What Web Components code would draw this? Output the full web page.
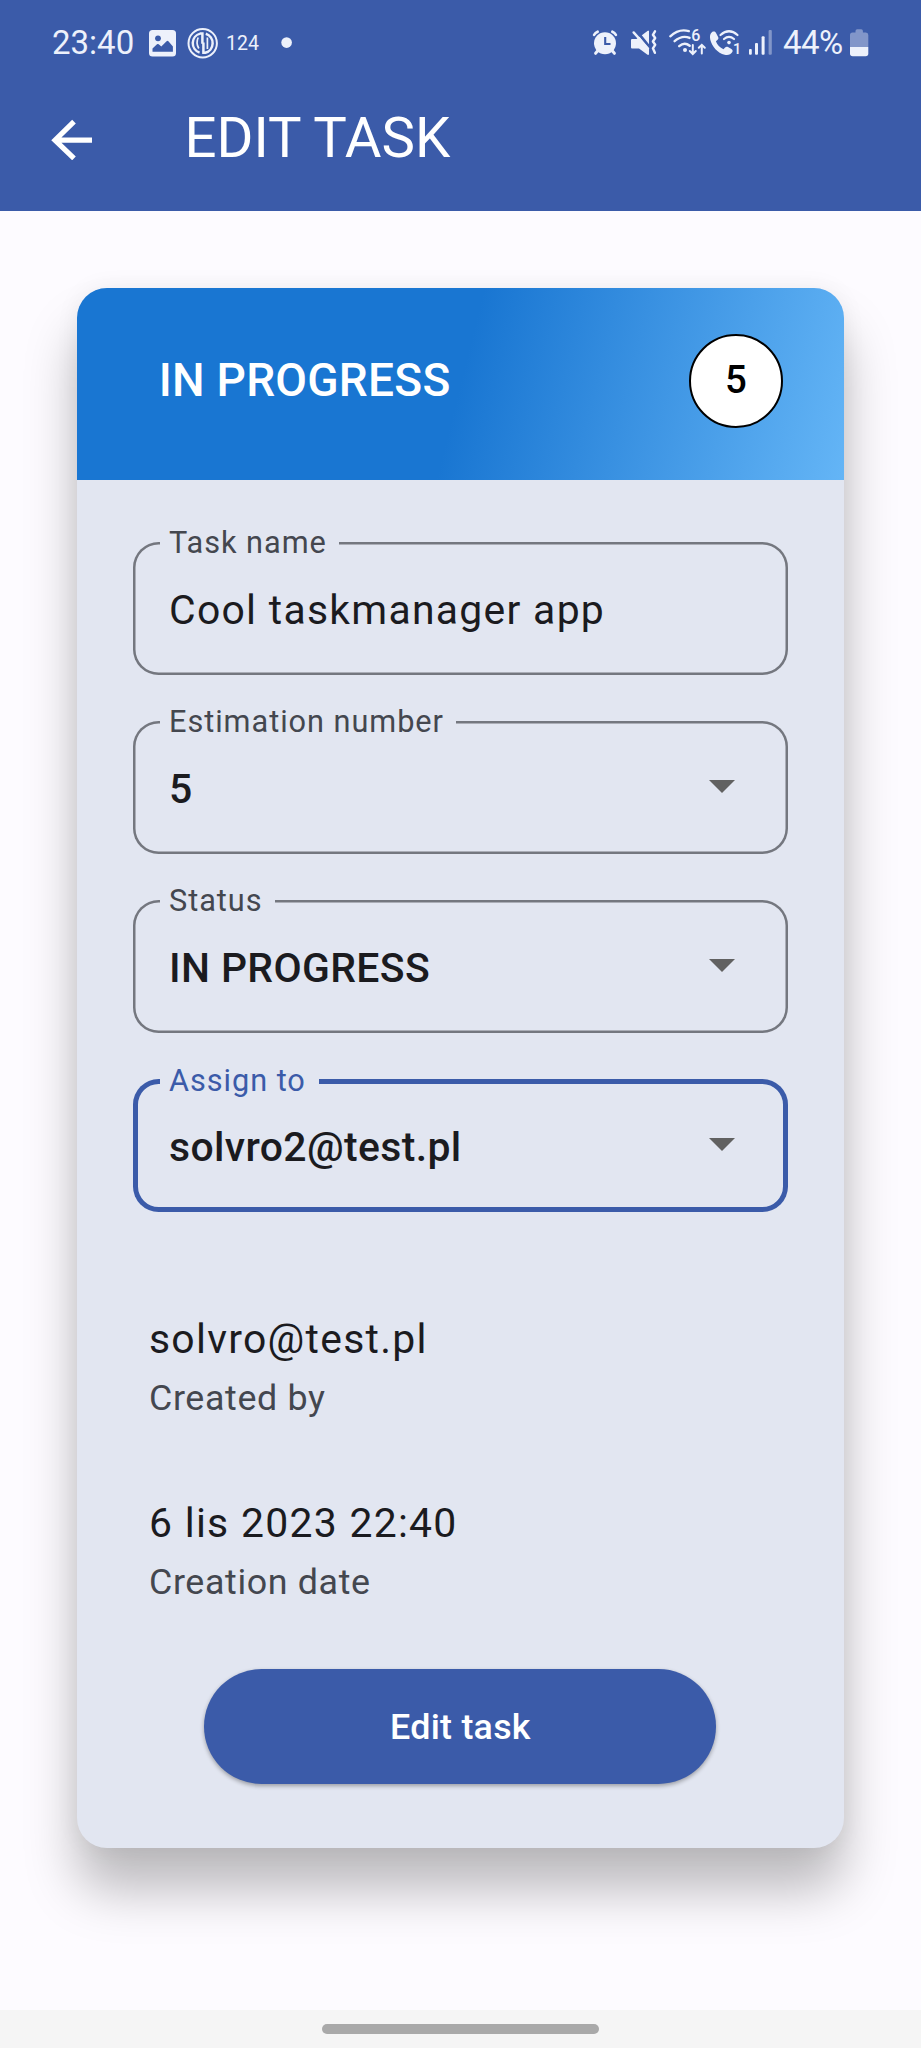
<!DOCTYPE html>
<html lang="en">
<head>
<meta charset="utf-8">
<title>Edit task</title>
<style>
html,body{margin:0;padding:0}
body{width:921px;height:2048px;overflow:hidden;background:#fdfbff;font-family:Roboto,"Liberation Sans",sans-serif;color:#1b1b1f}
</style>
</head>
<body>
<task-app></task-app>
<script>
const define = (name, html) => customElements.define(name, class extends HTMLElement {
  constructor() {
    super();
    this.attachShadow({ mode: 'open' }).innerHTML = html;
  }
});

define('status-bar', `
<style>
:host{display:flex;align-items:flex-start;height:85px;color:#edf1fb;fill:currentColor;box-sizing:border-box;padding:0 51px 0 52px;white-space:nowrap}
svg{display:block;flex:none;height:85px}
.t{font-size:33px;line-height:86px;letter-spacing:0;flex:none}
.time{width:96px}
.n{font-size:19.5px;line-height:87px;width:51px;margin-left:2px}
.pct{letter-spacing:-.6px;width:67px}
.sp{flex:1}
.st{fill:none;stroke:currentColor}
.cut{fill:#3b5ba9}
</style>
<span class="t time">23:40</span>
<svg width="30" viewBox="148 0 30 85"><rect x="149" y="30" width="27" height="26.5" rx="3.5"/><circle class="cut" cx="158" cy="38.3" r="2.9"/><path class="cut" d="M152.5 51.8v-3.3l4.5-4.2q.8-.7 1.7 0l2.6 2.3 5.3-5.4q.9-.8 1.8 0l4.5 5.4v5.2z"/></svg>
<svg width="46" viewBox="178 0 46 85"><g class="st"><circle cx="202.7" cy="43.2" r="14.2" stroke-width="2"/><path stroke-width="2.5" d="M199.6 52.6a9.9 9.9 0 0 1 .6-19h2.2v10.2M205.8 33.8a9.9 9.9 0 0 1-.6 19h-1.8V42.6"/><path stroke-width="1.7" d="M198.2 37.5q-2.6 5.6.6 11M207.4 37.5v11.5"/></g></svg>
<span class="t n">124</span>
<svg width="20" viewBox="276 0 20 85"><circle cx="285.6" cy="42.6" r="5.3"/></svg>
<span class="sp"></span>
<svg width="36" viewBox="588 0 36 85"><circle cx="605" cy="43.3" r="11"/><g class="st" stroke-linecap="round"><path stroke-width="2.6" d="M594.1 34.8q1.2-2 3.6-3.1M615.9 34.8q-1.2-2-3.6-3.1"/><path stroke-width="3" d="M598 50.5l-2.4 2.8M612 50.5l2.4 2.8"/></g><path d="M605.2 37v7h5.3" fill="none" stroke="#3b5ba9" stroke-width="2.1"/></svg>
<svg width="42" viewBox="624 0 42 85"><path d="M631 40q0-1 1-1h4.5l3-2.2L649 49v5.7h-1.5l-8.5-6.2h-7q-1 0-1-1zM641.8 35.2l6-4.5H649v13.5z"/><path class="st" stroke-width="2.4" stroke-linecap="round" stroke-linejoin="round" d="M633.6 32.4L648 48.5M655 31.3l-2.1 3.5 2.3 3.2-2.3 3.5 2.3 3.3-2.3 3.5 2 4.5"/></svg>
<svg width="42" viewBox="666 0 42 85"><g class="st" stroke-width="2.4" stroke-linecap="round"><path d="M670.3 36.3q8.5-8 18.5-5.2M674.6 41.2q7.5-6.5 15-3.3M679.2 46.2q5.2-4.6 10.5-.5"/><path stroke-width="2" d="M692.8 45v8.5M689.8 51l3 3 3-3M701.8 53.5v-8.5M698.8 47.8l3-3 3 3"/></g><circle cx="685" cy="50" r="2"/><text x="691.2" y="41.2" font-size="16" font-family="Roboto,sans-serif" font-weight="500">6</text></svg>
<svg width="38" viewBox="708 0 38 85"><path d="M712.4 31.8c1.5-.8 2.8-.4 3.5.9l2.2 4.2c.6 1.2.3 2.2-.7 3l-1.5 1.3c1.2 3.5 4 6.4 7.6 8l1.6-1.6c.8-.8 1.8-1 2.9-.5l3.4 1.8c1.3.7 1.6 2 .9 3.2-1.5 2.6-4.3 3.6-7.7 2.7-7-1.8-12.6-8-14.3-15-.8-3.5-.3-6.5 2.1-8z"/><g class="st" stroke-width="2.2" stroke-linecap="round"><path d="M720.5 35q8.5-7.5 17 0M724 39q5-4.2 10 0"/></g><circle cx="729" cy="42.6" r="1.8"/><text x="732.9" y="54.2" font-size="14.5" font-family="Roboto,sans-serif" font-weight="500">1</text></svg>
<svg width="37" viewBox="746 0 37 85"><rect x="749" y="49" width="2.8" height="5.8" rx="1"/><rect x="755" y="43" width="3" height="11.8" rx="1"/><rect x="761.6" y="36.3" width="3" height="18.5" rx="1"/><rect x="768.6" y="30" width="3.2" height="24.8" rx="1" opacity=".4"/></svg>
<span class="t pct">44%</span>
<svg width="20" viewBox="851 0 20 85"><path opacity=".4" d="M851 47V35q0-2.5 2.5-2.5h3V31q0-1.7 1.7-1.7h4q1.7 0 1.7 1.7v1.5h3q2.4 0 2.4 2.5v12z"/><path d="M851 47h18.3v6.5q0 2.7-2.7 2.7H853.7q-2.7 0-2.7-2.7z"/></svg>
`);

define('app-bar', `
<style>
:host{display:flex;flex-direction:column;height:211px;background:#3b5ba9;color:#fff}
.row{display:flex;align-items:center;height:108px}
svg{display:block;margin-left:51px;flex:none}
h1{margin:-1px 0 0 91.5px;font-size:56.3px;font-weight:400;line-height:107px;letter-spacing:0;white-space:nowrap}
</style>
<status-bar></status-bar>
<div class="row">
<svg width="42" height="42" viewBox="0 0 42 42" fill="none" stroke="#fff" stroke-width="5.2"><path d="M41 22.2H4M23 3.6L4 22.2l19 18.2"/></svg>
<h1><slot></slot></h1>
</div>`);

define('card-header', `
<style>
:host{display:flex;align-items:center;justify-content:space-between;height:191.9px;box-sizing:border-box;padding:0 61px 0 82px;background:linear-gradient(104.04deg,#1976d2 50%,#64b5f6)}
h2{margin:0;color:#fff;font-weight:500;font-size:46px;letter-spacing:.25px;line-height:60px;padding-bottom:8px;white-space:nowrap}
.badge{width:94.5px;height:94.5px;box-sizing:border-box;border:2px solid #000;border-radius:50%;background:#fff;color:#000;font-size:38.4px;font-weight:500;line-height:88px;text-align:center;margin-bottom:6px}
</style>
<h2><slot></slot></h2><div class="badge"><slot name="badge"></slot></div>`);

define('outlined-field', `
<style>
:host{--line:#74777f;--label:#44474f;--bw:2.5px;--gap:12px;--dy:-19px;display:flex;align-items:center;justify-content:space-between;position:relative;height:133px;width:655px;box-sizing:border-box;font-size:40.9px;letter-spacing:.38px;font-weight:500;padding:0 53px 0 36px}
:host([plain]){font-weight:400;letter-spacing:1.28px}
:host([focused]){--line:#3b5ba9;--label:#3b5ba9;--bw:5px;--gap:13px;--dy:-18px}
.line{position:absolute;inset:0;box-shadow:inset 0 0 0 var(--bw) var(--line);border-radius:25.6px}
.label{position:absolute;left:27px;top:var(--dy);height:40px;line-height:40px;padding:0 var(--gap) 0 9px;background:#e2e6f1;color:var(--label);font-size:30.7px;font-weight:400;letter-spacing:.96px;white-space:nowrap}
.value{position:relative;line-height:48px;padding-top:4px;white-space:nowrap}
svg{display:block;position:relative;margin-bottom:2px}
:host([plain]) svg{display:none}
</style>
<div class="line"></div><div class="label"><slot name="label"></slot></div>
<div class="value"><slot></slot></div>
<svg width="26" height="13" viewBox="0 0 26 13"><path d="M0 0h26L13 13z" fill="#616161"/></svg>`);

define('info-row', `
<style>
:host{display:block;height:184.5px;padding-left:16px;white-space:nowrap}
.v{font-size:40.9px;letter-spacing:1.28px;line-height:62px}
.l{font-size:35.8px;letter-spacing:.64px;line-height:56px;color:#44474f}
</style>
<div class="v"><slot></slot></div><div class="l"><slot name="label"></slot></div>`);

define('filled-button', `
<style>
:host{display:flex;align-items:center;justify-content:center;width:512px;height:115px;border-radius:58px;background:#3b5ba9;color:#fff;font-weight:500;font-size:35.8px;letter-spacing:.26px;box-shadow:0 2px 4px rgba(0,0,0,.32)}
span{padding-top:1px}
</style><span><slot></slot></span>`);

define('task-card', `
<style>
:host{display:block;width:767.5px;height:1559.3px;border-radius:30px;background:#e2e6f1;box-shadow:0 42px 52px rgba(0,0,0,.26),0 0 24px rgba(0,0,0,.06)}
card-header{border-radius:30px 30px 0 0}
.fields{display:flex;flex-direction:column;gap:46.1px;padding:61.4px 56.3px 0}
.info{padding:96px 56.3px 0}
filled-button{margin:-8.3px auto 0}
</style>
<card-header>IN PROGRESS<span slot="badge">5</span></card-header>
<div class="fields">
<outlined-field plain><span slot="label">Task name</span>Cool taskmanager app</outlined-field>
<outlined-field><span slot="label">Estimation number</span>5</outlined-field>
<outlined-field><span slot="label">Status</span>IN PROGRESS</outlined-field>
<outlined-field focused><span slot="label">Assign to</span>solvro2@test.pl</outlined-field>
</div>
<div class="info">
<info-row>solvro@test.pl<span slot="label">Created by</span></info-row>
<info-row>6 lis 2023 22:40<span slot="label">Creation date</span></info-row>
</div>
<filled-button>Edit task</filled-button>`);

define('nav-handle', `
<style>
:host{display:flex;justify-content:center;height:38.5px;background:#f5f5f5;box-sizing:border-box;padding-top:14.5px}
i{width:277px;height:10px;border-radius:5px;background:#a9a9a9}
</style><i></i>`);

define('task-app', `
<style>
:host{display:flex;flex-direction:column;height:2048px}
main{flex:1;padding:77.3px 0 0 76.7px}
</style>
<app-bar>EDIT TASK</app-bar>
<main><task-card></task-card></main>
<nav-handle></nav-handle>`);
</script>
</body>
</html>
